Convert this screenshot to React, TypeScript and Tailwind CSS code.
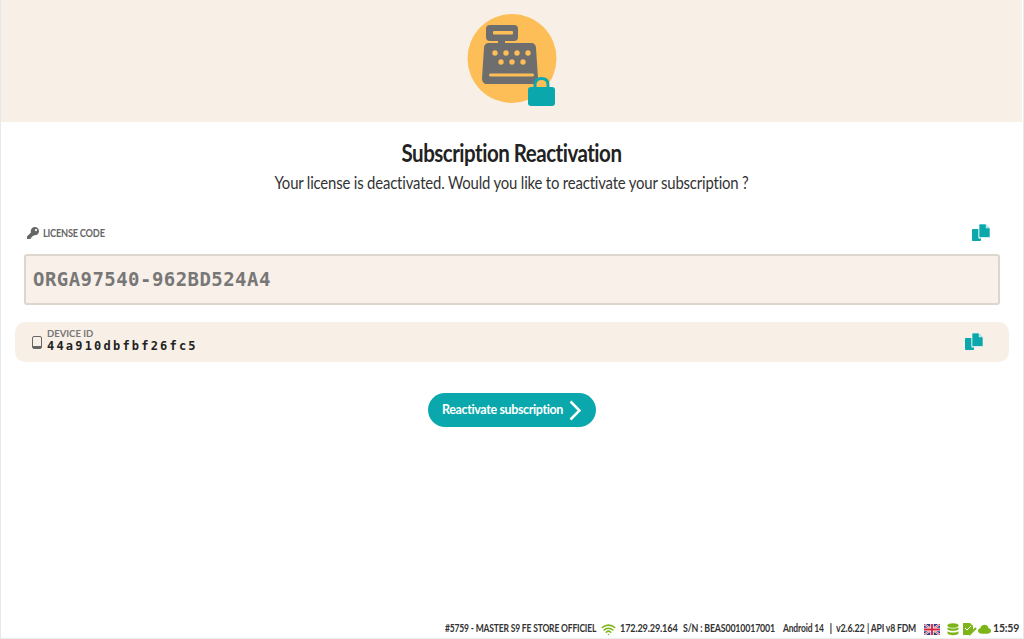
import React from 'react';
import { FaKey } from 'react-icons/fa';
import { Wifi } from 'lucide-react';

const sans = 'font-["Lato","Open_Sans",sans-serif]';
const mono = 'font-["DejaVu_Sans_Mono",monospace]';

function CopyIcon() {
  return (
    <svg width="18" height="18" viewBox="0 0 18 18" className="text-[#0aa8ac]">
      <path fill="currentColor" d="M0 6C0 5.400 .4 5 1 5H6.500V14.500H9V16C9 16.600 8.600 17 8 17H1C.4 17 0 16.600 0 16Z" />
      <path fill="currentColor" stroke="#ffffff" strokeWidth=".6" d="M7 1C7 .4 7.400 0 8 0H13.500L18 4.500V12.500C18 13.100 17.600 13.500 17 13.500H8C7.400 13.500 7 13.100 7 12.500Z" />
      <path fill="#ffffff" opacity=".75" d="M13.800 .8L17.200 4.200H13.800Z" />
    </svg>
  );
}

function RegisterIcon() {
  return (
    <svg width="90" height="93" viewBox="467 14 90 93">
      <circle cx="512" cy="58.500" r="44.500" fill="#fdbd57" />
      <rect x="486" y="25" width="32" height="16" rx="4" fill="#6e6e6e" />
      <rect x="493" y="31" width="20" height="3.500" rx="1" fill="#fdbd57" />
      <rect x="498" y="40" width="7" height="5" fill="#6e6e6e" />
      <path fill="#6e6e6e" d="M489 43H531C534 43 536 45 536 48L538 78C538 82 536 84 533 84H487C484 84 482 82 482 78L484 48C484 45 486 43 489 43Z" />
      {[495, 506, 517, 528].map((x) => <circle key={x} cx={x} cy="53" r="2.700" fill="#fdbd57" />)}
      {[501, 512, 523].map((x) => <circle key={x} cx={x} cy="62" r="2.700" fill="#fdbd57" />)}
      <rect x="489" y="73.500" width="45" height="3" rx="1.500" fill="#fdbd57" />
      <path d="M535 90V84.500C535 80.500 537.500 78.500 541.500 78.500C545.500 78.500 548 80.500 548 84.500V90" fill="none" stroke="#0aa8ac" strokeWidth="3" />
      <rect x="528" y="87" width="27" height="19" rx="3" fill="#0aa8ac" />
    </svg>
  );
}

export default function App() {
  return (
    <div className={`flex flex-col h-[639px] w-[1024px] overflow-hidden bg-white border-x border-[#e8e8e8] pr-px ${sans}`}>
      <header className="h-[122px] shrink-0 bg-[#f8f0e6] flex justify-center pt-[14px]">
        <RegisterIcon />
      </header>

      <main className="flex-1 flex flex-col">
        <div className="text-center pt-[17px]">
          <h1 className="text-[25px] leading-[26px] font-bold text-[#222] tracking-[-0.6px] scale-x-[.82]">Subscription Reactivation</h1>
          <p className="text-[17px] leading-[24px] mt-[6px] text-[#333] tracking-[-0.2px] scale-x-[.876]">Your license is deactivated. Would you like to reactivate your subscription ?</p>
        </div>

        <div className="flex items-center justify-between pl-[26px] pr-[32px] mt-[27px] h-[22px]">
          <div className="flex items-center gap-[4px] text-[#666] text-[12px] font-bold tracking-[-0.3px]">
            <FaKey size={12} />
            <span className="w-[62px] whitespace-nowrap origin-left scale-x-[.77]">LICENSE CODE</span>
          </div>
          <CopyIcon />
        </div>

        <div className={`ml-[23px] mr-[22px] mt-[10px] h-[51px] bg-[#f9f0e9] border-2 border-[#dcd6cf] rounded-[3px] flex items-center px-[7px] text-[19px] font-bold text-[#777] tracking-[0.45px] ${mono}`}>
          ORGA97540-962BD524A4
        </div>

        <div className="ml-[14px] mr-[13px] mt-[17px] h-[40px] bg-[#f8f0e6] rounded-[10px] flex items-center pl-[17px] pr-[26px]">
          <svg width="10" height="13" viewBox="0 0 10 13" className="text-[#666]">
            <rect x=".5" y=".5" width="9" height="12" rx="1.500" fill="none" stroke="currentColor" strokeWidth="1" />
            <rect x="1" y="10" width="8" height="2" fill="currentColor" />
          </svg>
          <div className="ml-[5px] mb-[3px] flex flex-col">
            <span className="text-[9.5px] leading-[10px] font-bold text-[#777] w-[46px] whitespace-nowrap">DEVICE ID</span>
            <span className={`mt-[1px] text-[12px] leading-[12px] font-bold text-[#222] tracking-[2.2px] ${mono}`}>44a910dbfbf26fc5</span>
          </div>
          <div className="ml-auto"><CopyIcon /></div>
        </div>

        <div className="flex justify-center mt-[31px]">
          <button className="h-[34px] w-[168px] rounded-full bg-[#0aa8ac] text-white text-[12.5px] font-bold flex items-center justify-center gap-[6px] tracking-[-0.37px]">
            Reactivate subscription
            <svg width="12" height="21" viewBox="0 0 12 21">
              <path d="M1.500 1.500L10.500 10.500L1.500 19.500" fill="none" stroke="#ffffff" strokeWidth="2.500" />
            </svg>
          </button>
        </div>

        <footer className="mt-auto h-[19px] flex items-center justify-end pr-[6px] text-[10.5px] font-bold text-[#333] whitespace-pre border-b border-[#eee] tracking-[-0.2px]">
          <span className="w-[151px] origin-left scale-x-[.81]">#5759 - MASTER S9 FE STORE OFFICIEL</span>
          <Wifi size={15} strokeWidth={2.5} className="text-[#7cb518] ml-[5px] mr-[4px]" />
          <span className="w-[58px] origin-left scale-x-[.875]">172.29.29.164</span>
          <span className="w-[92px] ml-[5px] origin-left scale-x-[.84]">S/N : BEAS0010017001</span>
          <span className="w-[41px] ml-[8px] origin-left scale-x-[.81]">Android 14</span>
          <span className="ml-[5px]">|</span>
          <span className="w-[29px] ml-[4px] origin-left scale-x-[.855]">v2.6.22</span>
          <span className="w-[49px] ml-[2px] origin-left scale-x-[.82]">| API v8 FDM</span>
          <svg width="16" height="11" viewBox="0 0 16 11" className="ml-[8px]">
            <rect width="16" height="11" fill="#2b3f87" />
            <path d="M0 0L16 11M16 0L0 11" stroke="#fff" strokeWidth="2" />
            <path d="M0 0L16 11M16 0L0 11" stroke="#d8203a" strokeWidth=".8" />
            <path d="M8 0V11M0 5.500H16" stroke="#fff" strokeWidth="3.400" />
            <path d="M8 0V11M0 5.500H16" stroke="#d8203a" strokeWidth="1.800" />
          </svg>
          <svg width="12" height="13" viewBox="0 0 12 13" className="ml-[7px] text-[#7cb518]">
            <ellipse cx="6" cy="2.500" rx="5.500" ry="2.300" fill="currentColor" />
            <path fill="currentColor" d="M.5 4.200C2 6 10 6 11.500 4.200V6.300C10 8.300 2 8.300 .5 6.300Z" />
            <path fill="currentColor" d="M.5 8.200C2 10 10 10 11.500 8.200V10.500C10 12.800 2 12.800 .5 10.500Z" />
          </svg>
          <svg width="14" height="13" viewBox="0 0 14 13" className="ml-[4px] text-[#7cb518]">
            <path fill="currentColor" d="M0 0H7L10 3V7L6 12H0Z" />
            <path d="M6 12L13 5" stroke="currentColor" strokeWidth="2" />
            <path d="M2 5L4 7L8 3" stroke="#fff" strokeWidth="1" fill="none" />
          </svg>
          <svg width="13" height="10" viewBox="0 0 14 10" className="ml-[1px] text-[#7cb518]">
            <path fill="currentColor" d="M3.500 10C1.500 10 0 8.800 0 7C0 5.500 1 4.500 2.500 4.200C3 2 4.800 .5 7 .5C9.200 .5 10.800 1.800 11.300 3.800C12.900 4.200 14 5.400 14 7C14 8.800 12.500 10 10.700 10Z" />
          </svg>
          <span className="ml-[2px] w-[23px]">15:59</span>
        </footer>
      </main>
    </div>
  );
}
